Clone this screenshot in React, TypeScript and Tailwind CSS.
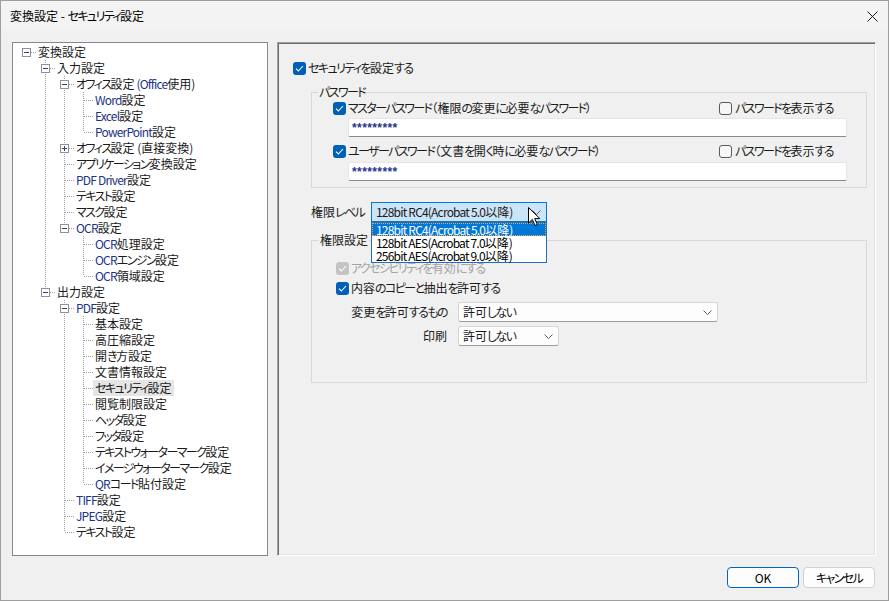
import React from "react";

type TreeNode = {
  label: string;
  children?: TreeNode[];
  collapsed?: boolean;
  selected?: boolean;
};

type Row = {
  label: string;
  level: number;
  hasNext: boolean;
  box: "minus" | "plus" | null;
  guides: boolean[];
  selected?: boolean;
};

const TREE: TreeNode[] = [
  {
    label: "変換設定",
    children: [
      {
        label: "入力設定",
        children: [
          {
            label: "オフィス設定 (Office使用)",
            children: [{ label: "Word設定" }, { label: "Excel設定" }, { label: "PowerPoint設定" }],
          },
          { label: "オフィス設定 (直接変換)", collapsed: true, children: [{ label: "-" }] },
          { label: "アプリケーション変換設定" },
          { label: "PDF Driver設定" },
          { label: "テキスト設定" },
          { label: "マスク設定" },
          {
            label: "OCR設定",
            children: [{ label: "OCR処理設定" }, { label: "OCRエンジン設定" }, { label: "OCR領域設定" }],
          },
        ],
      },
      {
        label: "出力設定",
        children: [
          {
            label: "PDF設定",
            children: [
              { label: "基本設定" },
              { label: "高圧縮設定" },
              { label: "開き方設定" },
              { label: "文書情報設定" },
              { label: "セキュリティ設定", selected: true },
              { label: "閲覧制限設定" },
              { label: "ヘッダ設定" },
              { label: "フッタ設定" },
              { label: "テキストウォーターマーク設定" },
              { label: "イメージウォーターマーク設定" },
              { label: "QRコード貼付設定" },
            ],
          },
          { label: "TIFF設定" },
          { label: "JPEG設定" },
          { label: "テキスト設定" },
        ],
      },
    ],
  },
];

function flatten(nodes: TreeNode[], level: number, guides: boolean[], out: Row[]) {
  nodes.forEach((n, i) => {
    const hasNext = i < nodes.length - 1;
    const hasKids = !!n.children && n.children.length > 0;
    out.push({
      label: n.label,
      level,
      hasNext,
      box: hasKids ? (n.collapsed ? "plus" : "minus") : null,
      guides,
      selected: n.selected,
    });
    if (hasKids && !n.collapsed) flatten(n.children!, level + 1, [...guides, hasNext], out);
  });
  return out;
}

const ROWS = flatten(TREE, 0, [], []);
const DOT = "#a0a0a0";

// The UI font squeezes kana and latin more than Noto does, so tighten those runs.
function T({ children, latin = "" }: { children: string; latin?: string }) {
  const parts = children.split(/([\u3041-\u309F\u30A0-\u30FF]+|[A-Za-z0-9.() ]*[A-Za-z0-9.()]+)/);
  return (
    <>
      {parts.map((p, i) => {
        if (!p) return null;
        if (/^[\u3041-\u309F\u30A0-\u30FF]+$/.test(p))
          return (
            <span key={i} className="tracking-[-1.6px]">
              {p}
            </span>
          );
        if (/[A-Za-z0-9]/.test(p))
          return (
            <span key={i} className={`tracking-[-0.8px] ${latin}`}>
              {p}
            </span>
          );
        return <span key={i}>{p}</span>;
      })}
    </>
  );
}

function GuideCell({ on }: { on: boolean }) {
  return (
    <svg width="19" height="16" className="shrink-0" shapeRendering="crispEdges">
      {on && <line x1="9.5" y1="0" x2="9.5" y2="16" stroke={DOT} strokeDasharray="1 1" />}
    </svg>
  );
}

function ConnectorCell({ row }: { row: Row }) {
  const root = row.level === 0;
  return (
    <svg width="19" height="16" className="shrink-0" shapeRendering="crispEdges">
      {!root && <line x1="9.5" y1="0" x2="9.5" y2="8" stroke={DOT} strokeDasharray="1 1" />}
      {row.hasNext && <line x1="9.5" y1="8" x2="9.5" y2="16" stroke={DOT} strokeDasharray="1 1" />}
      <line x1={row.box ? 14 : 10} y1="8.5" x2="19" y2="8.5" stroke={DOT} strokeDasharray="1 1" />
      {row.box && (
        <g>
          <rect x="5.5" y="4.5" width="8" height="8" fill="#fff" stroke="#919191" />
          <line x1="7" y1="8.5" x2="12" y2="8.5" stroke="#24408f" />
          {row.box === "plus" && <line x1="9.5" y1="6" x2="9.5" y2="11" stroke="#24408f" />}
        </g>
      )}
    </svg>
  );
}

function Check({ checked, disabled }: { checked: boolean; disabled?: boolean }) {
  if (!checked)
    return <span className="block w-[13px] h-[13px] shrink-0 rounded-[3px] border border-[#5a5a5a] bg-[#f7f7f7]" />;
  return (
    <span
      className={`flex items-center justify-center w-[13px] h-[13px] shrink-0 rounded-[3px] ${disabled ? "bg-[#c4c4c4]" : "bg-[#005fb8]"}`}
    >
      <svg width="9" height="7" viewBox="0 0 9 7">
        <path d="M1 3.6 L3.4 6 L8 1" fill="none" stroke="#fff" strokeWidth="1.1" />
      </svg>
    </span>
  );
}

function Chevron() {
  return (
    <svg width="9" height="5" viewBox="0 0 9 5" className="shrink-0">
      <path d="M0.5 0.5 L4.5 4.5 L8.5 0.5" fill="none" stroke="#5f5f5f" strokeWidth="1" />
    </svg>
  );
}

function Combo({ width, value }: { width: string; value: string }) {
  return (
    <div
      className={`${width} h-[20px] flex items-center justify-between pl-[4px] pr-[5px] bg-[#fdfdfd] border border-[#d6d6d6] border-b-[#9c9c9c] rounded-[3px]`}
    >
      <span>
        <T>{value}</T>
      </span>
      <Chevron />
    </div>
  );
}

function Stars() {
  return (
    <span
      className="text-[12px] font-bold tracking-[0.4px] text-[#25358a]"
      style={{ fontFamily: '"Liberation Sans", sans-serif' }}
    >
      *********
    </span>
  );
}

export default function App() {
  return (
    <div
      className="w-[889px] h-[601px] bg-[#f0f0f0] border border-[#9e9e9e] flex flex-col text-[12px] leading-[16px] text-[#1a1a1a] [font-feature-settings:'palt'] overflow-hidden"
      style={{ fontFamily: '"Noto Sans CJK JP", "Noto Sans", sans-serif' }}
    >
      {/* Title bar */}
      <div className="h-[30px] shrink-0 flex items-center justify-between pl-[9px] pr-[10px] bg-[#f3f3f3]">
        <span className="text-black">
          <T>変換設定 - セキュリティ設定</T>
        </span>
        <svg width="11" height="11" viewBox="0 0 11 11">
          <path d="M0.5 0.5 L10.5 10.5 M10.5 0.5 L0.5 10.5" stroke="#1a1a1a" strokeWidth="1" />
        </svg>
      </div>

      <div className="flex pl-[11px] pt-[11px] gap-[9px]">
        {/* Tree */}
        <div className="w-[256px] h-[514px] shrink-0 bg-white border border-[#828790] pl-[4px] pt-[1px] overflow-hidden">
          {ROWS.map((r, i) => (
            <div key={i} className="flex h-[16px] items-center">
              {r.guides.map((g, k) => (
                <GuideCell key={k} on={g} />
              ))}
              <ConnectorCell row={r} />
              <span className={`px-[2px] whitespace-nowrap ${r.selected ? "bg-[#e5e5e5]" : ""}`}>
                <T latin="text-[#1c3388]">{r.label}</T>
              </span>
            </div>
          ))}
        </div>

        {/* Settings panel */}
        <div className="relative w-[599px] h-[514px] shrink-0 flex flex-col pl-[15px] pt-[17px] border border-t-[#a0a0a0] border-l-[#a0a0a0] border-r-white border-b-white shadow-[inset_1px_1px_0_#6e6e6e,inset_-1px_-1px_0_#e3e3e3]">
          <div className="flex items-center h-[16px]">
            <Check checked />
            <span className="ml-[2px]">
              <T>セキュリティを設定する</T>
            </span>
          </div>

          <fieldset className="ml-[18px] mt-[8px] w-[556px] border border-[#d9d9d9]">
            <legend className="ml-[6px] px-[1px] leading-[16px]">
              <T>パスワード</T>
            </legend>
            <div className="pl-[21px] pr-[19px] pb-[6px]">
              <div className="flex items-center justify-between h-[16px]">
                <div className="flex items-center">
                  <Check checked />
                  <span className="ml-[2px]">
                    <T>マスターパスワード（権限の変更に必要なパスワード）</T>
                  </span>
                </div>
                <div className="w-[128px] flex items-center">
                  <Check checked={false} />
                  <span className="ml-[3px]">
                    <T>パスワードを表示する</T>
                  </span>
                </div>
              </div>
              <div className="mt-[2px] ml-[15px] h-[19px] flex items-center pl-[3px] bg-white border border-[#e6e6e6] border-b-[#8a8a8a] rounded-[2px]">
                <Stars />
              </div>
              <div className="mt-[6px] flex items-center justify-between h-[16px]">
                <div className="flex items-center">
                  <Check checked />
                  <span className="ml-[2px]">
                    <T>ユーザーパスワード（文書を開く時に必要なパスワード）</T>
                  </span>
                </div>
                <div className="w-[128px] flex items-center">
                  <Check checked={false} />
                  <span className="ml-[3px]">
                    <T>パスワードを表示する</T>
                  </span>
                </div>
              </div>
              <div className="mt-[3px] ml-[15px] h-[19px] flex items-center pl-[3px] bg-white border border-[#e6e6e6] border-b-[#8a8a8a] rounded-[2px]">
                <Stars />
              </div>
            </div>
          </fieldset>

          <div className="ml-[18px] mt-[14px] flex items-center h-[20px]">
            <span className="w-[60px]">
              <T>権限レベル</T>
            </span>
            <div className="relative w-[176px] h-[20px]">
              <div className="h-full flex items-center justify-between pl-[4px] pr-[5px] bg-[#cce4f7] border border-[#0078d4]">
                <span>
                  <T>128bit RC4(Acrobat 5.0以降)</T>
                </span>
                <Chevron />
              </div>
              <div className="absolute left-0 top-full w-full bg-white border border-[#1e6fc0] z-10">
                <div className="h-[13px] flex items-center pl-[3px] bg-[#0078d7] text-white border border-dotted border-[#f5a33a]">
                  <T>128bit RC4(Acrobat 5.0以降)</T>
                </div>
                <div className="h-[13px] flex items-center pl-[4px] text-black">
                  <T>128bit AES(Acrobat 7.0以降)</T>
                </div>
                <div className="h-[13px] flex items-center pl-[4px] text-black">
                  <T>256bit AES(Acrobat 9.0以降)</T>
                </div>
              </div>
              <svg width="13" height="20" viewBox="0 0 13 20" className="absolute left-[157px] top-[5px] z-20">
                <path
                  d="M0.5 0.5 L0.5 16 L4.3 12.4 L7 18.5 L9.3 17.5 L6.7 11.6 L11.8 11.6 Z"
                  fill="#fff"
                  stroke="#000"
                  strokeWidth="1"
                  strokeLinejoin="round"
                />
              </svg>
            </div>
          </div>

          <fieldset className="ml-[18px] mt-[10px] w-[556px] border border-[#d9d9d9]">
            <legend className="ml-[7px] px-[1px] leading-[16px]">
              <T>権限設定</T>
            </legend>
            <div className="pl-[24px] pb-[36px]">
              <div className="mt-[12px] flex items-center h-[16px]">
                <Check checked disabled />
                <span className="ml-[2px] text-[#a3a3a3]">
                  <T>アクセシビリティを有効にする</T>
                </span>
              </div>
              <div className="mt-[4px] flex items-center h-[16px]">
                <Check checked />
                <span className="ml-[2px]">
                  <T>内容のコピーと抽出を許可する</T>
                </span>
              </div>
              <div className="mt-[6px] flex items-center h-[20px]">
                <span className="w-[111px] text-right">
                  <T>変更を許可するもの</T>
                </span>
                <div className="ml-[11px]">
                  <Combo width="w-[260px]" value="許可しない" />
                </div>
              </div>
              <div className="mt-[4px] flex items-center h-[20px]">
                <span className="w-[111px] text-right">印刷</span>
                <div className="ml-[11px]">
                  <Combo width="w-[101px]" value="許可しない" />
                </div>
              </div>
            </div>
          </fieldset>
        </div>
      </div>

      {/* Buttons */}
      <div className="mt-[11px] flex justify-end gap-[4px] pr-[13px]">
        <button className="w-[72px] h-[21px] flex items-center justify-center bg-[#fdfdfd] border border-[#0067c0] rounded-[4px] text-black">
          OK
        </button>
        <button className="w-[72px] h-[21px] flex items-center justify-center bg-[#fdfdfd] border border-[#d0d0d0] rounded-[4px] text-black">
          <T>キャンセル</T>
        </button>
      </div>
    </div>
  );
}
